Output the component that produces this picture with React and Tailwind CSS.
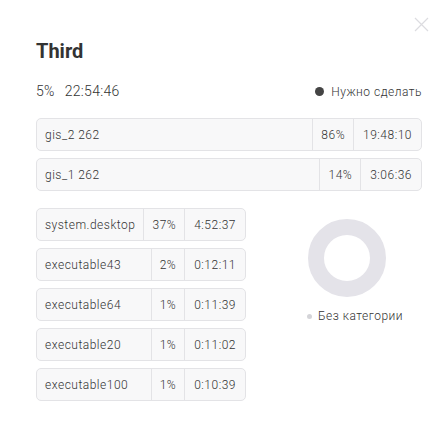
import React from "react";

const gisRows = [
    { name: "gis_2 262", pct: "86%", time: "19:48:10" },
    { name: "gis_1 262", pct: "14%", time: "3:06:36" },
];

const appRows = [
    { name: "system.desktop", pct: "37%", time: "4:52:37" },
    { name: "executable43", pct: "2%", time: "0:12:11" },
    { name: "executable64", pct: "1%", time: "0:11:39" },
    { name: "executable20", pct: "1%", time: "0:11:02" },
    { name: "executable100", pct: "1%", time: "0:10:39" },
];

function Row({ row }) {
    return (
        <div className="flex h-[33px] items-stretch rounded-[5px] border border-[#e3e3e6] bg-[#f8f8f9] text-[12px] font-light tracking-[0.5px] text-[#333]">
            <div className="flex flex-1 items-center pl-[8px]">{row.name}</div>
            <div className="flex items-center border-l border-[#e3e3e6] px-[8px]">{row.pct}</div>
            <div className="flex items-center border-l border-[#e3e3e6] px-[9px]">{row.time}</div>
        </div>
    );
}

export default function App() {
    return (
        <div className="relative h-[429px] w-[443px] bg-white pl-[36px] pr-[21px] pt-[37px] font-['Roboto',sans-serif]">
            <button className="absolute right-[14px] top-[17px] text-[#dcdce0]">
                <svg width="15" height="15" viewBox="0 0 15 15" stroke="currentColor" strokeWidth="1.2">
                    <path d="M1 1 L14 14 M14 1 L1 14" />
                </svg>
            </button>

            <h1 className="text-[20px] font-bold leading-[28px] text-[#333]">Third</h1>

            <div className="mt-[16px] flex items-center justify-between">
                <div className="flex gap-[10px] text-[14px] font-light tracking-[0.3px] text-[#333]">
                    <span>5%</span>
                    <span>22:54:46</span>
                </div>
                <div className="flex items-center gap-[7px] text-[12px] font-light tracking-[0.5px] text-[#333]">
                    <span className="h-[9px] w-[9px] rounded-full bg-[#444]"></span>
                    <span>Нужно сделать</span>
                </div>
            </div>

            <div className="mt-[16px] flex flex-col gap-[7px]">
                {gisRows.map((r) => (
                    <Row key={r.name} row={r} />
                ))}
            </div>

            <div className="mt-[17px] flex">
                <div className="flex w-[210px] flex-col gap-[7px]">
                    {appRows.map((r) => (
                        <Row key={r.name} row={r} />
                    ))}
                </div>
                <div className="flex flex-1 flex-col items-center pl-[26px] pt-[11px]">
                    <svg width="78" height="78" viewBox="0 0 78 78">
                        <circle cx="39" cy="39" r="31" fill="none" stroke="#e4e3e9" strokeWidth="16" />
                    </svg>
                    <div className="mt-[10px] flex items-center gap-[6px] pl-[16px] text-[12px] font-light tracking-[0.5px] text-[#333]">
                        <span className="h-[5px] w-[5px] rounded-full bg-[#d4d4d8]"></span>
                        <span>Без категории</span>
                    </div>
                </div>
            </div>
        </div>
    );
}
